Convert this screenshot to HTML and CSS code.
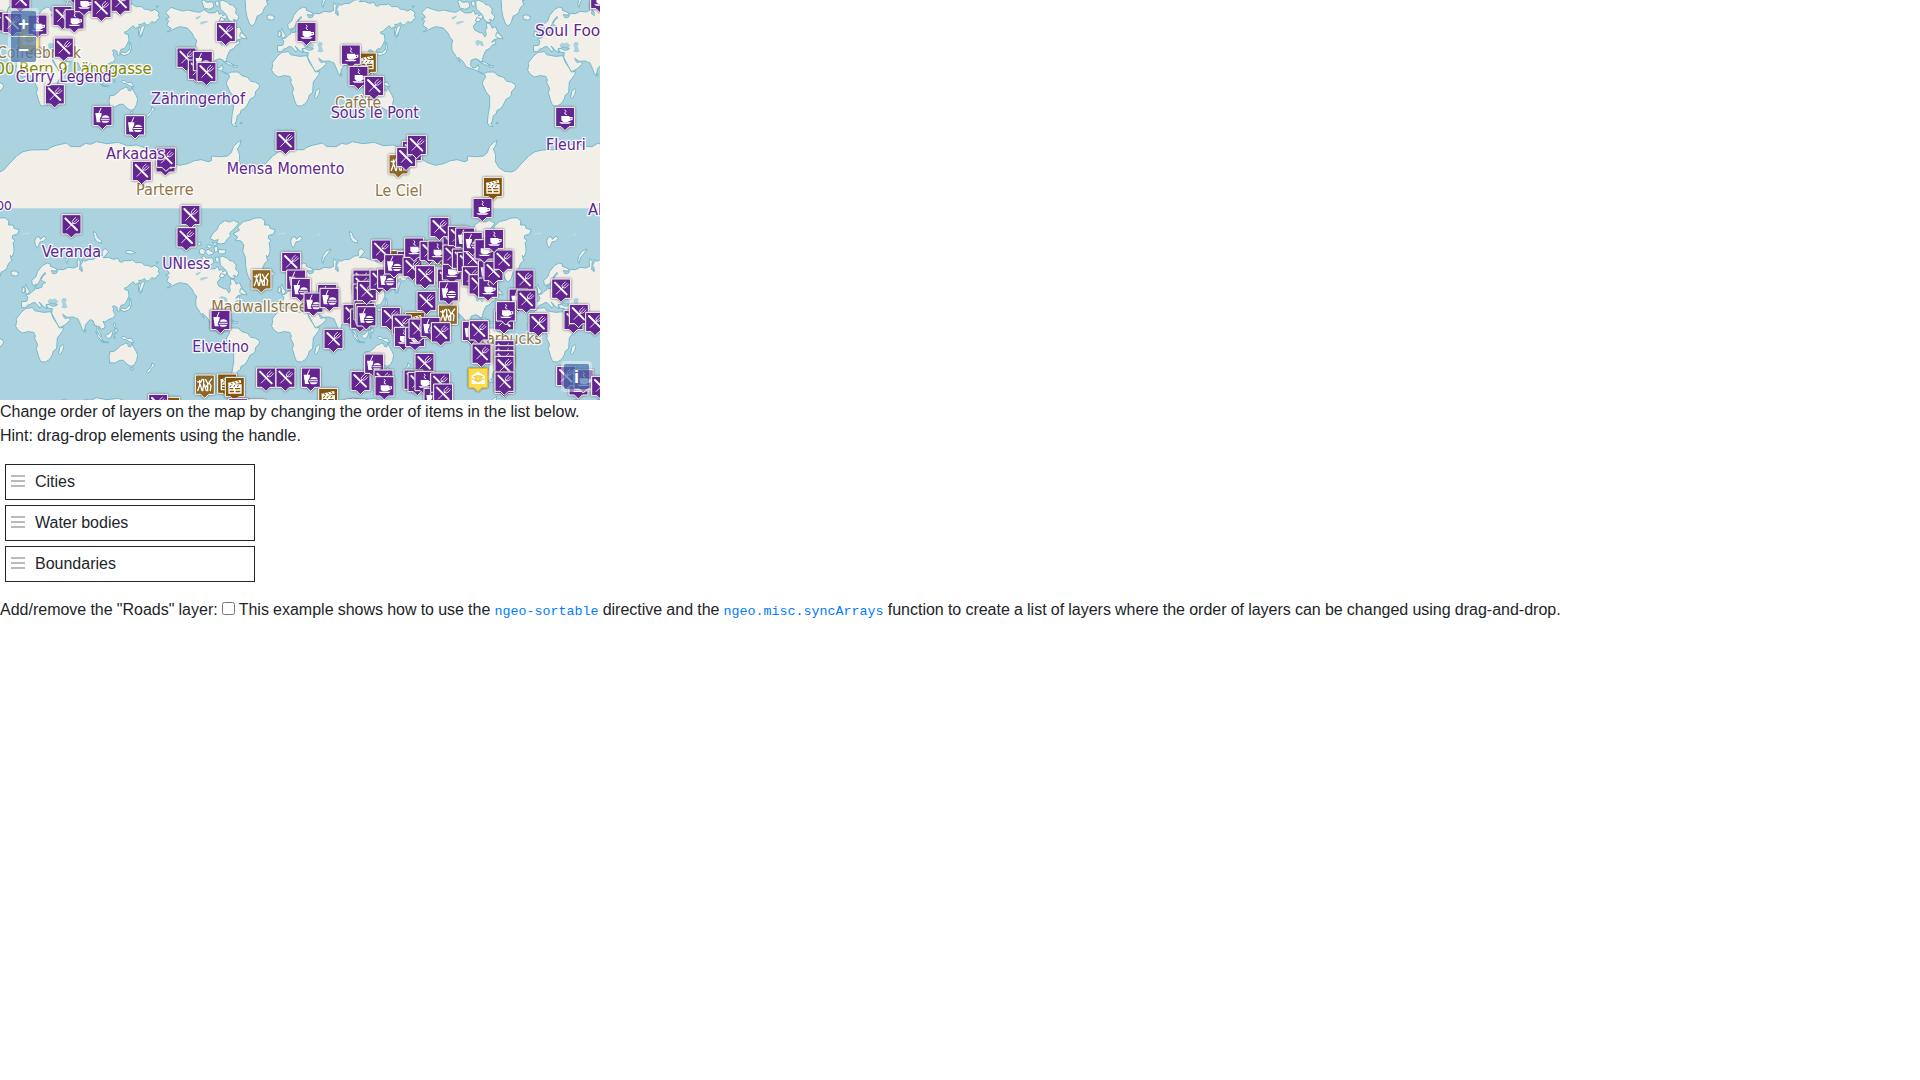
FILE: index.html
```html
<!DOCTYPE html>
<html lang="en">
<head>
<meta charset="utf-8">
<title>Sortable layers example</title>
<link rel="stylesheet" href="styles.css">
</head>
<body>
<div class="map">
<svg class="map-canvas" viewBox="0 0 1800 1200" width="600" height="400">
<defs>
<g id="world">
<!-- Europe and Asia -->
<path class="land" d="M65 299L64 281 80 280 84 268 77 261 89 258 96 250 104 246 105 235 109 233 108 243 125 238 128 228 137 224 128 220 123 215 129 204 138 196 134 194 124 207 119 219 111 231 106 228 104 233 97 231 95 217 107 207 113 190 128 172 142 165 152 169 150 174 171 183 168 189 153 188 160 198 170 195 175 184 190 185 205 178 221 180 233 175 231 162 235 152 241 160 239 185 247 191 246 180 241 172 247 163 246 154 254 160 265 155 280 154 296 144 307 143 307 130 315 121 326 131 318 141 309 149 325 148 341 154 355 151 358 160 365 163 372 158 390 158 396 155 407 164 425 164 434 172 443 172 454 177 465 172 478 183 474 191 480 196 468 208 467 212 455 209 447 218 437 220 434 211 427 216 416 218 420 228 427 241 426 254 418 255 415 240 416 225 405 229 400 221 390 229 379 239 373 240 376 246 385 247 387 264 381 278 373 290 364 291 359 301 361 309 352 309 351 298 343 293 337 296 342 303 339 307 346 320 340 330 325 335 315 342 309 340 316 354 313 361 303 364 298 355 293 356 298 370 305 384 300 385 291 369 290 353 284 352 279 338 270 335 257 350 253 369 248 367 239 344 234 333 219 327 202 328 188 319 194 331 208 329 211 336 196 350 179 359 173 351 165 335 155 316 157 302 143 300 139 290 149 290 158 295 169 293 172 288 152 286 145 289 138 291 141 302 133 298 126 290 117 282 125 294 118 300 116 294 105 284 99 284 91 289 82 292 78 299Z"/>
<!-- Africa -->
<path class="land" d="M78 301L98 299 104 308 119 311 132 313 153 311 159 329 174 352 178 360 191 358 188 369 172 390 170 422 160 429 157 441 148 455 136 462 122 461 116 446 109 422 113 410 104 391 106 383 101 373 84 371 67 375 55 367 47 355 50 338 48 333 64 313Z"/>
<!-- Islands around Eurasia, Indonesia, Australia and New Zealand -->
<path class="land" d="M188 409l-9 10-3 18 5 3 7-12 3-13zM330 431l12-1 14-11 7-8 8-1 4-5 8 2 2 8 7 2 3-11 6 11 8 14 4 11-3 15-8 15-11 3-13-9-8-9-10 0-16 8-15-1-2-18zM390 480l9-1 0 6-5 1zM455 465l10 6-8 8-5 9-9 8-4-4 8-9 6-5zM287 370l12 12 11 17-6-1-10-12zM302 398l16 4 8-1-1 3-17-1zM316 382l11-5 8-9 3 6-4 14-9 4-8-5zM342 377l7-3-2 5-4 4 3 8-4-1zM363 388l9-3 11 7 11-2 8 15-15-4-8-6-10-1zM342 344l4 3 0 9 4 5-5 1-5-9zM341 365l10-3 3 7-5 3zM361 306l4-6 12 2 10-8 3-12-3-10 3-2 5 14-4 16-7 7-12 4zM418 246l4-18 6-8 6 4-5 15-7 14zM65 253l3-17 8 5-3 13zM77 229l5 11 7 10-5 9-7-2 0-8-3-12zM32 192l11-4 14 7-8 10-13-3zM108 88l10-2 3 8 12-10 6 7-9 9-10 2-8 19-6-10-2-12zM201 166l-4-8 4-16 10-13 14-6-7 12-12 13zM280 70l9 5 4 14 12 9 0 8-15-5-7-12zM377 129l13-2 17 7-13 4-15-2zM468 162l8 1-5 3zM252 366l5-1 1 6-5 1z"/>
<!-- North and South America -->
<g transform="translate(462 144)">
<path class="land" d="M35 38L51 22 68 28 86 33 100 30 125 35 137 37 150 29 165 39 184 38 191 30 196 43 203 40 207 48 216 42 219 54 207 59 199 68 190 79 194 90 210 98 219 99 224 111 229 105 226 91 231 84 228 68 242 73 247 85 256 79 264 97 276 108 272 114 251 119 245 127 257 121 257 131 246 136 240 145 228 151 222 163 217 178 216 190 208 181 197 176 183 181 182 196 189 204 198 202 204 194 208 204 204 211 212 219 222 220 233 216 252 216 264 227 281 232 290 244 304 246 317 255 315 264 305 274 303 289 288 298 280 315 271 327 261 331 259 341 250 347 247 364 242 371 249 380 239 379 232 369 234 347 239 318 239 289 227 274 217 251 220 241 227 232 224 224 215 220 202 213 187 207 169 201 160 186 145 171 150 187 144 179 134 163 126 151 125 135 128 120 121 114 114 100 100 84 78 80 66 84 52 92 39 96 53 86 38 76 44 62 35 58 47 52Z"/>
</g>
<!-- Arctic Canada, the Caribbean and the Falklands -->
<g transform="translate(450 0)">
<path class="land" d="M180 92L188 77 202 64 206 51 224 38 239 42 250 37 267 45 258 57 249 66 239 75 242 84 232 93 224 106 211 108 199 104 205 95 193 98ZM165 130L174 124 190 133 189 139 175 142ZM147 126L156 121 167 128 161 140 149 137ZM143 106L151 101 154 111 145 113ZM174 110L187 114 180 121 169 118ZM187 102L205 107 194 113ZM191 117L202 115 205 128 195 134ZM203 124L228 126 225 137 207 138ZM155 147L162 143 169 151 188 149 192 165 178 172 162 168ZM195 149L205 146 208 160 199 164ZM209 149L216 144 233 151 240 159 247 158 259 171 257 184 267 194 261 207 251 201 254 213 242 209 234 202 230 190 222 181 211 171ZM213 195L224 201 220 210 208 207ZM272 241L283 248 291 261 275 258 269 252ZM220 329L234 329 251 338 240 340 229 333ZM250 340L264 342 259 346 249 345ZM269 513L276 511 274 516Z"/>
</g>
<!-- Greenland -->
<path class="land" d="M699 77L718 67 713 57 730 41 750 36 765 30 783 29 795 39 793 51 808 51 810 61 826 65 820 79 806 82 805 91 813 98 807 105 810 120 810 132 804 147 799 142 803 159 794 166 787 184 771 193 766 211 757 222 749 216 741 195 737 174 736 148 728 129 732 112 723 99 705 96 714 88Z"/>
<path class="water" d="M191 270l-6 6 4 14-3 8 7 2 8-3-5-13 3-10zM145 279l4-6 8 3 8-4 9 9-10 5-18-1zM658 269l8-4 14 6 2 10-5 1-6-8-5 7-7-5 4-6zM588 197l14-5-5 6-8 4zM601 212l14-4 8 1-9 4-10 4z"/>
<path class="islets" d="M437 430l3 1M232 503l2 1M521 337l2 1M593 385l2 0M406 273l5-2M184 83l8-6M65 80l9-4M74 78l14-3"/>
<!-- Antarctica -->
<path class="ice" d="M0 660L12 653 27 636 51 611 69 599 91 594 144 593 150 587 168 580 200 573 211 583 240 584 257 574 272 577 290 569 320 575 355 571 382 581 410 579 440 589 460 601 478 618 497 621 514 632 539 640 562 635 583 626 604 623 624 629 634 626 635 612 659 614 682 612 694 602 700 584 712 572 723 564 719 582 712 591 719 608 718 629 729 647 746 658 768 660V769H0Z"/>
<path class="coast" d="M0 660L12 653 27 636 51 611 69 599 91 594 144 593 150 587 168 580 200 573 211 583 240 584 257 574 272 577 290 569 320 575 355 571 382 581 410 579 440 589 460 601 478 618 497 621 514 632 539 640 562 635 583 626 604 623 624 629 634 626 635 612 659 614 682 612 694 602 700 584 712 572 723 564 719 582 712 591 719 608 718 629 729 647 746 658 768 660"/>
</g>
<path id="box" d="M2 2H59V60H42L30 72 18 60H2Z"/>
<g id="r"><use href="#box" class="purple"/><path class="line knife" d="M12 13L47 48"/><path class="line thin" d="M16 47L35 28M35 28Q30 22 35 18L43 11M35 28Q42 31 47 25L52 19M38 25L48 15"/></g>
<g id="c"><use href="#box" class="purple"/><path class="glyph" d="M19 28H43V31H53V39L43 43 38 46H25L19 41ZM46 34V38L49 37V34ZM12 47H49L43 51H18Z"/><path class="line steam" d="M30 10Q36 15 30 18 27 22 34 24"/></g>
<g id="f"><use href="#box" class="purple"/><path class="glyph" d="M9 22H28L27 32Q23 36 22 43 24 47 26 50H13ZM28 36Q30 29 39 29 50 30 51 36ZM25 39H52V42H25ZM27 45H51Q48 51 43 51H34Q29 51 27 45Z"/><path class="line steam" d="M20 22L26 8"/></g>
<g id="m"><use href="#box" class="brown"/><path class="glyph" fill-rule="evenodd" d="M10 18L48 10 50 18 29 23H51V51H11V24ZM15 34V38H26V34ZM31 34V38H47V34ZM15 42V47H28V42ZM33 42V47H47V42Z"/><path class="stripe" d="M18 18L24 22M28 15L34 20M38 13L44 17M20 25L16 31M31 25L27 31M42 25L38 31"/></g>
<g id="b"><use href="#box" class="gold"/><path class="line dancer" d="M9 22L17 25 23 15M15 18V33L9 49M17 31L22 49M27 15V31L24 49M29 31L35 49M33 16L39 27V49M51 14L43 25 49 34 47 49M41 28L34 38"/></g>
<g id="y"><use href="#box" class="yellow"/><path class="glyph" d="M11 25L30 12 50 25V49H11Z"/><path class="mail" d="M17 27Q30 20 44 27L30 38ZM12 33L30 43 49 33"/></g>
</defs>
<rect class="sea" width="1800" height="1200"/>
<g id="worlds"></g>
<g id="features"></g>
</svg>
<div class="control zoom"><button>+</button><button>−</button></div>
<div class="control attribution"><button>i</button></div>
</div>
<p class="intro">Change order of layers on the map by changing the order of items in the list below.<br>Hint: drag-drop elements using the handle.</p>
<ul class="layers">
<li><span class="handle"></span>Cities</li>
<li><span class="handle"></span>Water bodies</li>
<li><span class="handle"></span>Boundaries</li>
</ul>
<div class="roads"><label>Add/remove the "Roads" layer: <input type="checkbox"></label> This example shows how to use the <code>ngeo-sortable</code> directive and the <code>ngeo.misc.syncArrays</code> function to create a list of layers where the order of layers can be changed using drag-and-drop.</div>
<script src="map.js"></script>
</body>
</html>
```
FILE: styles.css
```css
*{box-sizing:border-box}
body{margin:0;background:#fff;color:#212529;font:16px/1.5 "Liberation Sans",Arial,sans-serif;word-spacing:-.3px}
.map{position:relative;width:600px;height:400px;overflow:hidden}
.map-canvas{display:block;word-spacing:0}
.sea{fill:#aad3df}
.land{fill:#f2efe9;stroke:#77b9cd;stroke-width:3;stroke-linejoin:round}
.ice{fill:#f2efe9}
.coast{fill:none;stroke:#77b9cd;stroke-width:3;stroke-linejoin:round}
.water{fill:#aad3df;stroke:#91c5d6;stroke-width:1.5}
.islets{fill:none;stroke:#d5e6e6;stroke-width:2}
.purple{fill:#632590}
.brown{fill:#825508}
.gold{fill:#8b6825}
.yellow{fill:#fbdc4e;stroke:#e5bd32}
.pin{stroke:#fff;stroke-width:3;filter:drop-shadow(0 0 3px #555)}
.glyph{fill:#fff;stroke:none}
.line{fill:none;stroke:#fff;stroke-linecap:round;stroke-linejoin:round}
.knife{stroke-width:6}
.thin{stroke-width:2.5}
.steam{stroke-width:3}
.dancer{stroke-width:4}
.stripe{fill:none;stroke:#825508;stroke-width:3}
.mail{fill:#fbdc4e;stroke:#dfb72b;stroke-width:2}
.label{font:47px "DejaVu Sans Condensed","DejaVu Sans",sans-serif;font-stretch:condensed;paint-order:stroke;stroke:#fff;stroke-opacity:.85;stroke-width:8;stroke-linejoin:round}
.label-purple{fill:#632590}
.label-brown{fill:#937444}
.label-olive{fill:#858500}
.control{position:absolute;padding:2px;border-radius:4px;background:rgba(255,255,255,.4)}
.zoom{left:8px;top:8px}
.attribution{right:8px;bottom:8px}
.control button{display:block;width:25px;height:25px;margin:1px;padding:0;border:0;border-radius:2px;background:rgba(0,60,136,.5);color:#fff;font:bold 18.24px/25px "Liberation Sans",Arial,sans-serif;text-align:center}
.zoom button:first-child{border-radius:2px 2px 0 0}
.zoom button:last-child{border-radius:0 0 2px 2px}
.intro{margin:0 0 16px}
.layers{list-style:none;width:250px;margin:0 0 16px 5px;padding:0;display:flex;flex-direction:column;gap:5px}
.layers li{display:flex;align-items:center;gap:10px;height:36px;padding:5px;border:1px solid #212529}
.handle{width:14px;height:12px;margin-bottom:2px;background:repeating-linear-gradient(#bbb 0 2px,transparent 2px 5px)}
.roads{white-space:nowrap}
.roads input{width:13px;height:13px;margin:0}
code{font:13.33px "Liberation Mono",monospace;color:#007bff}
```
FILE: map.js
```js
const NS = 'http://www.w3.org/2000/svg';
const worlds = document.getElementById('worlds');
const features = document.getElementById('features');

function add(parent, tag, attrs, text) {
  const el = document.createElementNS(NS, tag);
  for (const key in attrs) el.setAttribute(key, attrs[key]);
  if (text) el.textContent = text;
  parent.appendChild(el);
  return el;
}

// The world repeats every 256 px, which is 768 map units.
for (const y of [-144, 624]) {
  for (const x of [-768, 0, 768, 1536]) add(worlds, 'use', { href: '#world', x, y });
}

// Labels: colour, left, right, baseline, text. Each is narrowed to its own span.
function labels(rows) {
  for (const [color, left, right, y, text] of rows) {
    const el = add(features, 'text', { class: 'label label-' + color }, text);
    const scale = (right - left) / el.getComputedTextLength();
    el.setAttribute('transform', `translate(${left} ${y}) scale(${scale} 1)`);
  }
}

// Pins: kind, left, top
function pins(list) {
  for (const row of list.trim().split(/\s*;\s*/)) {
    const [kind, x, y] = row.split(' ');
    add(features, 'use', { href: '#' + kind, class: 'pin', x, y });
  }
}

labels([
  ['brown', -8, 243, 174, 'Coffeebreak'], ['olive', -70, 455, 222, '3000 Bern 9 Länggasse'],
  ['brown', 408, 581, 585, 'Parterre'], ['brown', 1005, 1143, 325, 'Cafète'],
  ['brown', 1125, 1267, 589, 'Le Ciel'], ['brown', 634, 940, 937, 'Madwallstreet'],
  ['brown', 1415, 1625, 1032, 'Starbucks']
]);
pins(`y 57 85;r -50 33;r 31 -33;r 7 38;c 82 43;r 157 17;f 193 -60;c 193 27;c 222 -25;r 331 -26;r 274 -7;r 161 112;
r 134 252;f 277 317;f 375 345;r 466 456;r 468 442;r 529 142;r 563 178;f 578 152;r 589 185;r 647 65;r 826 392;
c 889 65;m 1070 157;c 1022 133;c 1045 197;r 1092 227;c 1665 320;c 1770 -34;b 1165 462;r 1205 422;r 1188 440;r 1220 404;m 1448 530;c 1417 593;
r 184 642;r 541 614;r 529 681;b 754 807;f 631 929;r 843 755;f 858 808;f 872 833;r 768 1102;r 826 1102;b 584 1123;m 651 1120;m 674 1130;m 480 1190;r 444 1181;m 735 1197;c 684 1194;
f 951 851;f 910 877;f 958 863;r 970 986;f 902 1102;m 954 1163;r 1051 1112;f 1092 1060;r 1120 1108;c 1123 1128;r 1037 1197;
r 1057 808;r 1057 823;r 1057 850;r 1027 911;r 1050 925;r 1060 900;r 1065 908;r 1070 842;f 1069 918;r 1108 808;f 1131 805;
m 1155 750;r 1113 718;r 1190 752;f 1152 762;r 1207 770;c 1212 712;r 1245 795;r 1258 722;m 1300 730;c 1282 721;r 1327 700;r 1288 650;
m 1215 935;r 1249 872;b 1313 913;r 1310 805;c 1325 780;f 1316 843;r 1327 733;r 1343 677;r 1355 745;f 1365 682;r 1370 755;r 1388 745;f 1388 695;
r 1385 798;r 1405 822;f 1433 780;c 1434 832;r 1450 782;c 1423 717;r 1480 748;c 1452 686;
r 1543 808;f 1525 865;r 1549 868;r 1585 938;r 1482 930;c 1487 903;r 1653 835;r 1690 929;r 1706 911;r 1755 935;
r 1142 920;r 1175 943;c 1181 980;c 1215 980;r 1225 955;f 1261 950;r 1292 966;f 1385 962;r 1406 960;
r 1483 1020;r 1483 1035;r 1483 1050;r 1483 1067;r 1483 1120;r 1483 1114;r 1414 1030;y 1404 1103;
r 1243 1058;r 1210 1108;r 1222 1115;c 1243 1112;f 1270 1163;r 1290 1117;r 1299 1150;c 1705 1125;r 1668 1097;c 1720 1107;r 1773 1127`);
labels([
  ['purple', 47, 335, 247, 'Curry Legend'], ['purple', 453, 735, 312, 'Zähringerhof'],
  ['purple', 318, 495, 477, 'Arkadas'], ['purple', 680, 1033, 521, 'Mensa Momento'],
  ['purple', 992, 1257, 355, 'Sous le Pont'], ['purple', 1638, 1757, 449, 'Fleuri'],
  ['purple', 1605, 1830, 108, 'Soul Food'], ['purple', -38, 35, 629, 'Bpo'],
  ['purple', 1764, 1860, 645, 'Aloo'], ['purple', 125, 303, 772, 'Veranda'],
  ['purple', 487, 631, 808, 'UNless'], ['purple', 577, 747, 1057, 'Elvetino']
]);
pins('r 395 482;f 631 929');
```
